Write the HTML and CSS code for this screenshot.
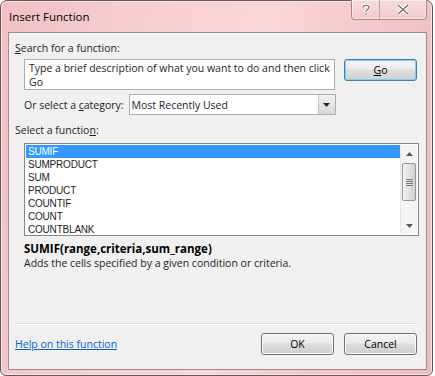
FILE: index.html
```html
<!DOCTYPE html>
<html>
<head>
<meta charset="utf-8">
<link rel="stylesheet" href="styles.css">
</head>
<body>
<div class="window">
  <div class="titlebar">
    <div class="title">Insert Function</div>
    <div class="caption-btns">
      <div class="cbtn help"><svg width="10" height="13" viewBox="0 0 10 13"><path d="M2 4.5 C2 1.5 8 1.5 8 4.5 C8 6.5 5 6.5 5 8.5 M5 10.5 L5 12" fill="none" stroke="#fff" stroke-width="3"/><path d="M2 4.5 C2 1.5 8 1.5 8 4.5 C8 6.5 5 6.5 5 8.5 M5 10.5 L5 12" fill="none" stroke="#6a6a6a" stroke-width="1.2"/></svg></div>
      <div class="cbtn close"><svg width="14" height="11" viewBox="0 0 14 11"><path d="M2 1 L12 10 M12 1 L2 10" stroke="#fff" stroke-width="3.4"/><path d="M2 1 L12 10 M12 1 L2 10" stroke="#6a6a6a" stroke-width="1.2"/></svg></div>
    </div>
  </div>
  <div class="client">
    <div class="label"><u>S</u>earch for a function:</div>
    <div class="row search-row">
      <div class="textbox">Type a brief description of what you want to do and then click Go</div>
      <div class="btn go"><u>G</u>o</div>
    </div>
    <div class="row cat-row">
      <span class="cat-label">Or select a <u>c</u>ategory:</span>
      <div class="combo">
        <span class="combo-text">Most Recently Used</span>
        <div class="drop"><svg width="7" height="4" viewBox="0 0 7 4"><path d="M0 0 H7 L3.5 4 Z" fill="#222"/></svg></div>
      </div>
    </div>
    <div class="label fn-label">Select a functio<u>n</u>:</div>
    <div class="listbox">
      <div class="items">
        <div class="item sel">SUMIF</div>
        <div class="item">SUMPRODUCT</div>
        <div class="item">SUM</div>
        <div class="item">PRODUCT</div>
        <div class="item">COUNTIF</div>
        <div class="item">COUNT</div>
        <div class="item">COUNTBLANK</div>
      </div>
      <div class="scrollbar">
        <div class="arrow"><svg width="7" height="4" viewBox="0 0 7 4"><path d="M0 4 H7 L3.5 0 Z" fill="#555"/></svg></div>
        <div class="track">
          <div class="thumb"><svg width="7" height="8" viewBox="0 0 7 8"><path d="M0 1.5 H7 M0 3.5 H7 M0 5.5 H7 M0 7.5 H7" stroke="#777" stroke-width="1"/></svg></div>
        </div>
        <div class="arrow"><svg width="7" height="4" viewBox="0 0 7 4"><path d="M0 0 H7 L3.5 4 Z" fill="#555"/></svg></div>
      </div>
    </div>
    <div class="syntax">SUMIF(range,criteria,sum_range)</div>
    <div class="desc">Adds the cells specified by a given condition or criteria.</div>
    <div class="spacer"></div>
    <div class="sep"></div>
    <div class="footer">
      <a class="help-link">Help on this function</a>
      <div class="btns">
        <div class="btn">OK</div>
        <div class="btn">Cancel</div>
      </div>
    </div>
  </div>
</div>
</body>
</html>
```

FILE: styles.css
```css
* { box-sizing: border-box; }
html, body { margin: 0; padding: 0; }
body {
  width: 435px; height: 376px; overflow: hidden;
  background: #fff;
  font-family: "Open Sans", sans-serif;
  font-size: 10.5px;
  color: #1e1e1e;
}
.window {
  width: 433px; height: 376px;
  border: 1px solid #6b5557;
  border-radius: 7px 7px 6px 6px;
  background: linear-gradient(100deg, #f2c0c3 0%, #f7cfd1 30%, #f9d6d7 55%, #f4c5c8 80%, #efbcbf 100%);
  box-shadow: inset 0 0 0 1px #fbe4e5;
  display: flex; flex-direction: column;
  padding: 0 5px 5px 7px;
}
.titlebar {
  height: 30px; display: flex; justify-content: space-between; align-items: flex-start;
}
.title { padding: 8px 0 0 1px; font-size: 11.5px; color: #000; }
.caption-btns {
  display: flex; height: 20px; margin-top: -1px;
  border: 1px solid #a58b8d; border-top: none;
  border-radius: 0 0 4px 4px;
  background: linear-gradient(#f8dbdc, #f3caca);
  box-shadow: inset 0 0 0 1px rgba(255,255,255,0.5);
}
.cbtn { display: flex; align-items: center; justify-content: center; }
.help { width: 28px; border-right: 1px solid #b9a0a1; }
.close { width: 46px; }
.client {
  flex: 1;
  background: #f0f0f0;
  border: 1px solid #9f8c8d;
  margin-top: 1px;
  display: flex; flex-direction: column;
  padding: 8px 9px 0 6px;
}
.label { height: 14px; line-height: 14px; }
.row { display: flex; }
.search-row { margin-top: 4px; padding-left: 9px; gap: 9px; align-items: flex-start; }
.textbox {
  width: 312px; height: 31px;
  background: #fff; border: 1px solid #abadb3;
  padding: 1px 4px; line-height: 14px;
}
.btn {
  width: 73px; height: 22px;
  border: 1px solid #707070; border-radius: 3px;
  background: linear-gradient(#f2f2f2 0%, #ebebeb 45%, #dddddd 50%, #cfcfcf 100%);
  box-shadow: inset 0 0 0 1px #fcfcfc;
  display: flex; align-items: center; justify-content: center;
  color: #000;
}
.go {
  border-color: #3c7fb1;
  background: linear-gradient(#f4f4f4 0%, #ececec 45%, #dedede 50%, #d2d2d2 100%);
  box-shadow: inset 0 0 0 1px #7ad1f5;
}
.cat-row { margin-top: 4px; padding-left: 9px; align-items: center; gap: 5px; }
.combo {
  width: 207px; height: 21px;
  background: #fff; border: 1px solid #abadb3;
  display: flex; align-items: center; justify-content: space-between;
  padding-left: 2px;
}
.drop {
  width: 17px; height: 19px;
  border-left: 1px solid #c3c3c3;
  background: linear-gradient(#f2f2f2, #d6d6d6);
  display: flex; align-items: center; justify-content: center;
}
.fn-label { margin-top: 8px; }
.listbox {
  margin: 6px 0 0 9px;
  width: 395px; height: 93px;
  background: #fff; border: 1px solid #828790;
  display: flex; padding: 1px 1px 1px 1px;
}
.items {
  flex: 1;
  font-family: "Liberation Sans", sans-serif; font-size: 10px; letter-spacing: -0.2px;
}
.item { height: 13px; line-height: 13px; padding-left: 2px; }
.item.sel { background: #3399ff; color: #fff; }
.scrollbar {
  width: 17px; display: flex; flex-direction: column;
  background: #f4f4f4; border-left: 1px solid #e6e6e6;
}
.arrow { height: 17px; display: flex; align-items: center; justify-content: center; }
.track { flex: 1; padding-top: 1px; }
.thumb {
  height: 38px; margin: 0 1px;
  border: 1px solid #979797; border-radius: 2px;
  background: linear-gradient(90deg, #f3f3f3, #e2e2e2 50%, #d0d0d0);
  display: flex; align-items: center; justify-content: center;
}
.syntax { margin: 5px 0 0 9px; font-weight: bold; font-size: 11.5px; line-height: 15px; color: #000; }
.desc { margin-left: 9px; line-height: 15px; }
.spacer { flex: 1; }
.sep { height: 2px; border-top: 1px solid #d5dfe5; border-bottom: 1px solid #fff; margin: 0 2px 0 0; }
.footer {
  display: flex; justify-content: space-between; align-items: center;
  height: 44px; padding-bottom: 8px; padding-top: 2px;
}
.help-link { color: #0066cc; text-decoration: underline; }
.btns { display: flex; gap: 10px; }
```
